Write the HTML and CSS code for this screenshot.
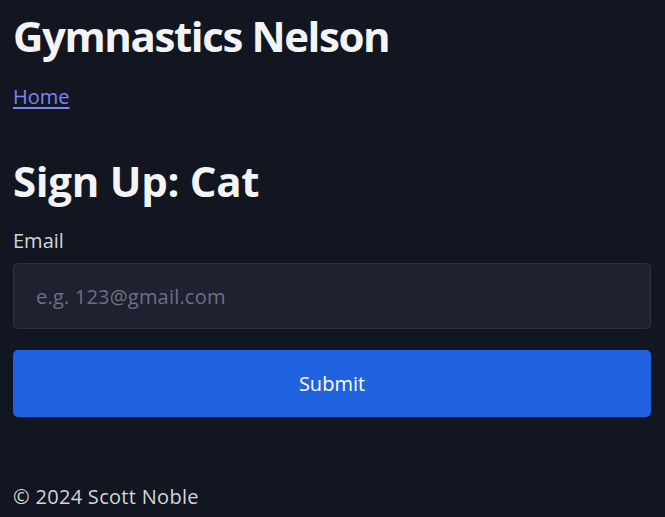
FILE: index.html
```html
<!DOCTYPE html>
<html lang="en">
<head>
<meta charset="utf-8">
<title>Gymnastics Nelson</title>
<link rel="stylesheet" href="styles.css">
</head>
<body>
<div class="page">
  <header class="site-header">
    <h1 class="site-title">Gymnastics Nelson</h1>
    <nav class="nav"><a href="#" class="nav-link">Home</a></nav>
  </header>
  <main class="main">
    <h2 class="page-title">Sign Up: Cat</h2>
    <form class="form">
      <label class="label" for="email">Email</label>
      <input class="input" id="email" type="email" placeholder="e.g. 123@gmail.com">
      <button class="button" type="button">Submit</button>
    </form>
  </main>
  <footer class="footer">© 2024 Scott Noble</footer>
</div>
</body>
</html>
```

FILE: styles.css
```css
* { box-sizing: border-box; }
html, body { margin: 0; padding: 0; }
body {
  background: #121620;
  color: #f3f4f6;
  font-family: "Open Sans", "Noto Sans", sans-serif;
}
.page {
  padding: 0 14px 0 13px;
}
.site-title {
  margin: 0;
  padding-top: 8px;
  font-size: 42px;
  line-height: 56px;
  font-weight: 700;
  letter-spacing: -1.4px;
  color: #f3f4f6;
}
.nav { margin-top: 20px; line-height: 26px; }
.nav-link {
  font-size: 20px;
  color: #7c85f6;
  text-decoration: underline;
  text-underline-offset: 3px;
}
.page-title {
  margin: 42px 0 0;
  font-size: 42px;
  line-height: 56px;
  font-weight: 700;
  letter-spacing: -0.3px;
}
.form { display: flex; flex-direction: column; }
.label {
  margin-top: 19px;
  font-size: 20px;
  line-height: 26px;
  color: #d1d5db;
}
.input {
  margin-top: 9px;
  height: 66px;
  background: #1f2130;
  border: 1px solid #2d3140;
  border-radius: 5px;
  padding: 0 22px;
  font-family: inherit;
  font-size: 20px;
  letter-spacing: 0.2px;
  color: #e5e7eb;
}
.input::placeholder { color: #6b7182; }
.button {
  margin-top: 21px;
  height: 67px;
  background: #2162e0;
  border: none;
  border-radius: 5px;
  color: #fff;
  font-family: inherit;
  font-size: 20px;
}
.footer {
  margin-top: 67px;
  font-size: 20px;
  line-height: 26px;
  letter-spacing: 0.3px;
  color: #d1d5db;
}
```
